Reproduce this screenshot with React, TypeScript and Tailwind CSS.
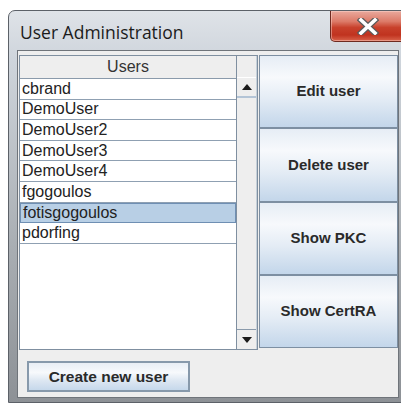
import React from "react";

const users = [
  "cbrand",
  "DemoUser",
  "DemoUser2",
  "DemoUser3",
  "DemoUser4",
  "fgogoulos",
  "fotisgogoulos",
  "pdorfing",
];

const actions = ["Edit user", "Delete user", "Show PKC", "Show CertRA"];

function CloseGlyph() {
  return (
    <svg width="22" height="17" viewBox="0 0 22 17">
      <path
        d="M4 2 L18 15 M18 2 L4 15"
        stroke="#5a5a5a"
        strokeWidth="6"
        strokeLinecap="square"
      />
      <path
        d="M4 2 L18 15 M18 2 L4 15"
        stroke="#ffffff"
        strokeWidth="3.6"
        strokeLinecap="square"
      />
    </svg>
  );
}

function Arrow({ up }: { up?: boolean }) {
  return (
    <svg width="10" height="6" viewBox="0 0 10 6">
      <path d={up ? "M0 6 L5 0 L10 6 Z" : "M0 0 L10 0 L5 6 Z"} fill="#1a1a1a" />
    </svg>
  );
}

export default function App() {
  const selected = "fotisgogoulos";

  return (
    <div className="h-[405px] w-[401px] overflow-hidden bg-white font-['Liberation_Sans',Arial,sans-serif]">
      {/* Window frame */}
      <div className="ml-[8px] mt-[10px] h-[393px] w-[400px] rounded-tl-[7px] border border-[#5c6168] bg-[linear-gradient(180deg,#dfe3e8_0%,#cfd5dc_12%,#a9aeb3_60%,#8d9196_100%)]">
        {/* Title bar */}
        <div className="flex h-[39px] items-start justify-between">
          <span className="pl-[11px] pt-[11px] font-['Open_Sans',sans-serif] text-[17.5px] leading-[21px] text-[#1b1b1b]">
            User Administration
          </span>
          <div className="mr-[2px] flex h-[31px] w-[75px] items-center justify-center rounded-b-[5px] border border-t-0 border-[#6e2a20] bg-[linear-gradient(180deg,#e9a99d_0%,#dc7a68_35%,#c8412c_55%,#c0331f_80%,#d9634b_100%)] shadow-[inset_0_0_0_1px_rgba(255,220,210,0.45)]">
            <CloseGlyph />
          </div>
        </div>

        {/* Content pane */}
        <div className="ml-[8px] h-[348px] w-[382px] border border-[#6f747a] bg-[#eeeeee]">
          <div className="flex pl-[1px] pt-[4px]">
            {/* Scroll pane with the user table */}
            <div className="flex h-[295px] w-[239px] border border-[#7f8fa0] bg-white">
              <div className="flex w-[217px] flex-col border-r border-[#7f8fa0]">
                <div className="flex h-[23px] items-center justify-center border-b border-[#8a9aab] bg-[#eeeeee] text-[16px] text-[#333333]">
                  Users
                </div>
                {users.map((name) => (
                  <div
                    key={name}
                    className={`flex h-[20.6px] items-center border-b px-[2px] text-[16px] leading-none text-[#222222] ${
                      name === selected
                        ? "border border-[#6f8fb3] bg-[#b8cfe5]"
                        : "border-[#8fa0b2]"
                    }`}
                  >
                    {name}
                  </div>
                ))}
              </div>
              {/* Vertical scrollbar */}
              <div className="flex w-[20px] flex-col border-r border-[#c5d0da] bg-[#eeeeee]">
                <div className="h-[22px] border-b border-white" />
                <div className="flex h-[20px] items-center justify-center border-b-2 border-[#b3c4d6]">
                  <Arrow up />
                </div>
                <div className="flex-1" />
                <div className="flex h-[20px] items-center justify-center border-t border-[#8a9aab]">
                  <Arrow />
                </div>
              </div>
            </div>

            {/* Action buttons */}
            <div className="ml-[1px] flex h-[293px] w-[139px] flex-col">
              {actions.map((label) => (
                <button
                  key={label}
                  type="button"
                  className="flex flex-1 items-center justify-center border border-[#7d8fa2] bg-[linear-gradient(180deg,#e6edf5_0%,#f7f9fc_30%,#e4ecf5_60%,#c3d6ea_100%)] text-[15px] font-bold text-[#2a2a2a]"
                >
                  {label}
                </button>
              ))}
            </div>
          </div>

          <button
            type="button"
            className="ml-[9px] mt-[11px] flex h-[31px] w-[163px] items-center justify-center border-2 border-[#8799ab] bg-[linear-gradient(180deg,#e8eef5_0%,#f7f9fc_35%,#dde7f2_65%,#c6d8eb_100%)] text-[15.5px] font-bold text-[#2a2a2a]"
          >
            Create new user
          </button>
        </div>
      </div>
    </div>
  );
}
